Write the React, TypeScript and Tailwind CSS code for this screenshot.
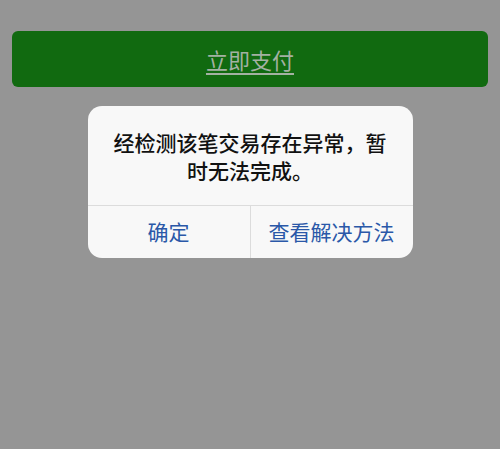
import React from "react";

export default function App() {
  const font = { fontFamily: '"Noto Sans CJK SC", "Noto Sans", sans-serif' };
  return (
    <div className="w-[500px] h-[449px] bg-[#959595] overflow-hidden flex flex-col items-center" style={font}>
      <div className="mt-[31px] w-[476px] h-[56px] rounded-[6px] bg-[#116a10] flex items-center justify-center">
        <span className="text-[22px] leading-none text-[#a3b1a2] underline underline-offset-[4px] decoration-[1.5px]">立即支付</span>
      </div>
      <div className="mt-[19px] w-[325px] h-[152px] rounded-[14px] bg-[#f8f8f8] flex flex-col">
        <div className="h-[99px] flex items-center justify-center px-[24px] pt-[1px]">
          <p className="text-[21px] leading-[28px] font-medium text-[#111] text-center">经检测该笔交易存在异常，暂时无法完成。</p>
        </div>
        <div className="flex-1 border-t border-[#dcdcdc] flex">
          <div className="w-[163px] flex items-center justify-center border-r border-[#dcdcdc] text-[21px] text-[#2a58a8]">确定</div>
          <div className="flex-1 flex items-center justify-center text-[21px] text-[#2a58a8]">查看解决方法</div>
        </div>
      </div>
    </div>
  );
}
